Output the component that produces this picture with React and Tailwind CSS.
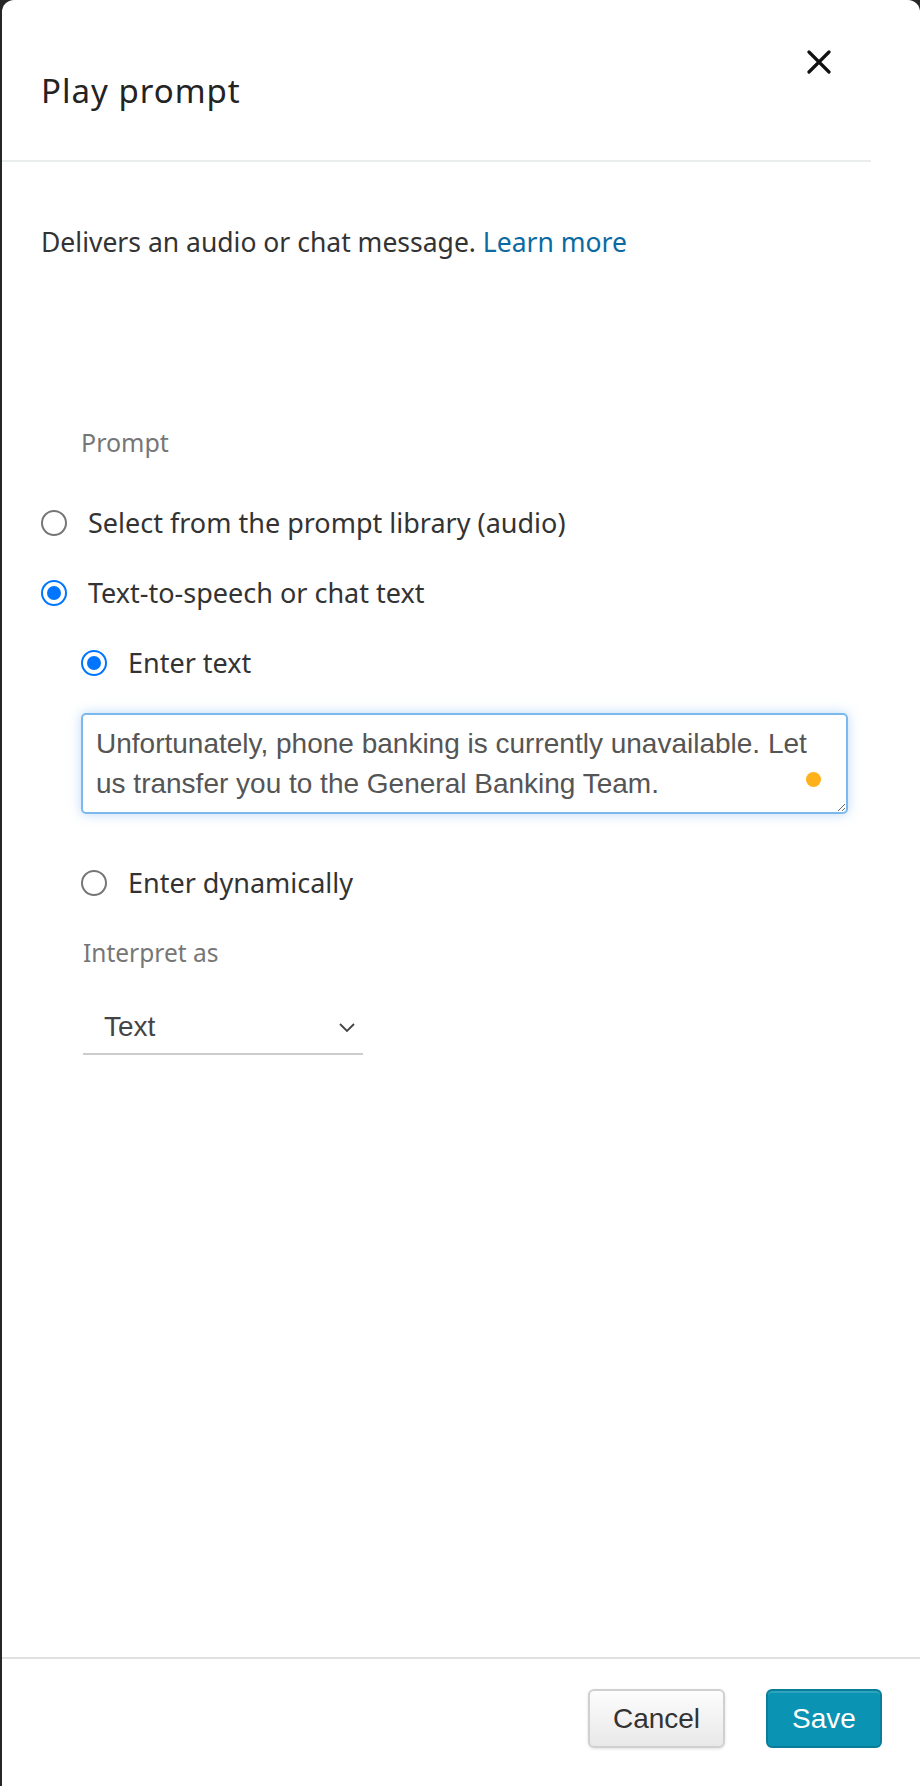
// Play prompt — panel de configuración de bloque

const UI_FONT = "font-['Noto_Sans','Open_Sans',sans-serif]";
const FIELD_FONT = "font-['Liberation_Sans',Arial,sans-serif]";

// Radio dibujado a mano (estilo nativo de Chrome)
function Radio({ checked }) {
  if (checked) {
    return (
      <span className="w-[26px] h-[26px] rounded-full border-[2.5px] border-[#0075ff] flex items-center justify-center flex-shrink-0 bg-white">
        <span className="w-[14px] h-[14px] rounded-full bg-[#0075ff]" />
      </span>
    );
  }
  return (
    <span className="w-[26px] h-[26px] rounded-full border-2 border-[#767676] flex-shrink-0 bg-white" />
  );
}

function RadioRow({ checked, label }) {
  return (
    <div className="h-[70px] flex items-center gap-[21px]">
      <Radio checked={checked} />
      <span className="text-[27px] text-[#333]">{label}</span>
    </div>
  );
}

export default function App() {
  return (
    <div className={`w-[920px] h-[1786px] bg-[#262626] flex ${UI_FONT}`}>
      <div className="flex-1 ml-[2px] bg-white rounded-t-[12px] flex flex-col">
        {/* ── Cabecera ─────────────────────────────────────────── */}
        <div className="h-[162px] mr-[49px] border-b-2 border-[#eaeded] flex items-start justify-between">
          <h1 className="mt-[71px] ml-[39px] text-[33px] leading-[40px] tracking-[1px] text-[#232323]">Play prompt</h1>
          <svg className="mt-[50px] mr-[40px]" width="24" height="24" viewBox="0 0 24 24">
            <path d="M2 2 L22 22 M22 2 L2 22" stroke="#111" strokeWidth="3.2" strokeLinecap="round" fill="none" />
          </svg>
        </div>

        {/* ── Contenido ────────────────────────────────────────── */}
        <div className="flex-1 pl-[39px]">
          <p className="mt-[64px] text-[26.5px] leading-[32px] text-[#333]">
            Delivers an audio or chat message. <span className="text-[#0a6aa1]">Learn more</span>
          </p>

          <p className="mt-[169px] ml-[40px] text-[25px] leading-[30px] text-[#767676]">Prompt</p>

          <div className="mt-[31px]">
            <RadioRow label="Select from the prompt library (audio)" />
            <RadioRow checked label="Text-to-speech or chat text" />

            <div className="pl-[40px]">
              <RadioRow checked label="Enter text" />

              <div className="relative mt-[15px] w-[767px]">
                <textarea
                  readOnly
                  value="Unfortunately, phone banking is currently unavailable. Let us transfer you to the General Banking Team."
                  className={`block w-full h-[101px] border-2 border-[#7ab8ee] rounded-[5px] pl-[13px] pr-[20px] pt-[9px] text-[28px] leading-[40px] text-[#555] outline-none shadow-[0_0_12px_rgba(120,180,240,0.5)] resize ${FIELD_FONT}`}
                />
                <span className="absolute right-[27px] top-[59px] w-[15px] h-[15px] rounded-full bg-[#ffb11c]" />
              </div>

              <div className="mt-[34px]">
                <RadioRow label="Enter dynamically" />
              </div>

              <p className="mt-[20px] ml-[2px] text-[24.5px] leading-[30px] text-[#767676]">Interpret as</p>

              <div className="mt-[33px] ml-[2px] w-[280px] h-[54px] border-b-2 border-[#cccccc] flex items-center justify-between pl-[21px] pr-[7px]">
                <span className={`text-[28px] text-[#444] ${FIELD_FONT}`}>Text</span>
                <svg width="18" height="12" viewBox="0 0 18 12">
                  <path d="M2 3 L9 10 L16 3" stroke="#444" strokeWidth="1.8" fill="none" />
                </svg>
              </div>
            </div>
          </div>
        </div>

        {/* ── Pie ──────────────────────────────────────────────── */}
        <div className="h-[129px] border-t-2 border-[#e1e1e1] flex items-start justify-end gap-[41px] pr-[38px] pt-[30px]">
          <button className={`w-[137px] h-[59px] rounded-[6px] border-2 border-[#d0d0d0] bg-gradient-to-b from-[#fdfdfd] to-[#e8e8e8] shadow-[0_1px_3px_rgba(0,0,0,0.12)] text-[28px] text-[#333] ${FIELD_FONT}`}>
            Cancel
          </button>
          <button className={`w-[116px] h-[59px] rounded-[6px] border-2 border-[#0a7d99] bg-[#0a93b2] shadow-[inset_0_2px_0_rgba(255,255,255,0.15)] text-[28px] text-white ${FIELD_FONT}`}>
            Save
          </button>
        </div>
      </div>
    </div>
  );
}
